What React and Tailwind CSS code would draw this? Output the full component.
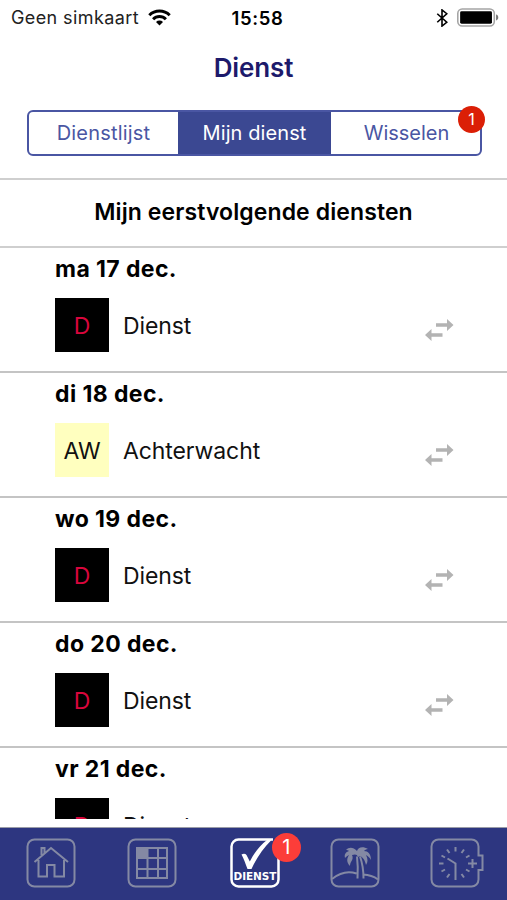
const DIENSTEN = [
  { dag: 'ma 17 dec.', code: 'D', naam: 'Dienst', kleur: 'bg-black text-[#d8063c]' },
  { dag: 'di 18 dec.', code: 'AW', naam: 'Achterwacht', kleur: 'bg-[#ffffbf] text-[#111]' },
  { dag: 'wo 19 dec.', code: 'D', naam: 'Dienst', kleur: 'bg-black text-[#d8063c]' },
  { dag: 'do 20 dec.', code: 'D', naam: 'Dienst', kleur: 'bg-black text-[#d8063c]' },
  { dag: 'vr 21 dec.', code: 'D', naam: 'Dienst', kleur: 'bg-black text-[#d8063c]' },
]

const TABS = [
  { id: 'home', icon: <HomeIcon /> },
  { id: 'rooster', icon: <RoosterIcon /> },
  { id: 'dienst', icon: <DienstIcon />, actief: true, badge: 1 },
  { id: 'vakantie', icon: <VakantieIcon /> },
  { id: 'uren', icon: <UrenIcon /> },
]

export default function App() {
  return (
    <div className="flex flex-col w-[507px] h-[900px] overflow-hidden bg-white font-['Inter',sans-serif] text-black">
      <StatusBar />
      <h1 className="h-[66px] pt-[17px] text-center text-[26px] leading-[32px] font-semibold tracking-[-0.1px] text-[#1d1a6b]">Dienst</h1>
      <Segmenten />
      <h2 className="h-[70px] shrink-0 mt-[22px] border-y-2 border-[#cfcfcf] text-center text-[23px] leading-[64px] font-semibold tracking-[0.1px]">
        Mijn eerstvolgende diensten
      </h2>
      <div className="h-[571px] shrink-0 overflow-hidden">
        {DIENSTEN.map((d) => (
          <DienstRij key={d.dag} dienst={d} />
        ))}
      </div>
      <nav className="mt-auto h-[73px] shrink-0 grid grid-cols-5 border-t border-[#9a9ca8] bg-[#2d3680]">
        {TABS.map((t) => (
          <button key={t.id} className={`relative flex justify-center pt-[10px] ${t.actief ? 'pl-[3px] text-white' : 'text-[#8489a4]'}`}>
            {t.icon}
            {t.badge && (
              <span className="absolute left-[69px] top-[5px] size-[29px] rounded-full bg-[#fc3d39] text-center text-[20px] leading-[29px] text-white">
                {t.badge}
              </span>
            )}
          </button>
        ))}
      </nav>
    </div>
  )
}

function StatusBar() {
  return (
    <div className="grid grid-cols-3 items-center h-[35px] shrink-0 pl-[11px] pr-[8px]">
      <div className="flex items-center gap-[9px]">
        <span className="whitespace-nowrap text-[18px] leading-[34px] tracking-[0.4px] text-[#222]">Geen simkaart</span>
        <svg width="23" height="17" viewBox="0 0 23 17" className="shrink-0" fill="none" stroke="currentColor" strokeWidth="3">
          <path d="M1.3 6.2a14.5 14.5 0 0 1 20.4 0M5.1 10.2a9 9 0 0 1 12.8 0" />
          <path d="M11.5 16.5 8 13a5 5 0 0 1 7 0Z" fill="currentColor" stroke="none" />
        </svg>
      </div>
      <span className="pl-[5px] text-center text-[18.5px] leading-[34px] font-semibold tracking-[0.6px]">15:58</span>
      <div className="flex items-center justify-end gap-[9px]">
        <svg width="12" height="18" viewBox="0 0 12 19" fill="none" stroke="currentColor" strokeWidth="1.7">
          <path d="M1 5l10 9-5 4V1l5 4-10 9" />
        </svg>
        <svg width="42" height="19" viewBox="0 0 43 19">
          <rect x="0.8" y="0.8" width="37.4" height="17.4" rx="4.5" fill="none" stroke="#a5a5a5" strokeWidth="1.6" />
          <rect x="3.2" y="3.2" width="32.6" height="12.6" rx="1.5" />
          <path d="M40 6.5c3 .5 3 5.500 0 6Z" fill="#777" />
        </svg>
      </div>
    </div>
  )
}

function Segmenten() {
  return (
    <div className="relative h-[55px] shrink-0 pl-[27px] pr-[25px] pt-[9px]">
      <div className="grid grid-cols-[149px_153px_1fr] h-[46px] overflow-hidden rounded-[6px] border-2 border-[#4a56a3] text-center text-[20px] leading-[43px] text-[#4a56a3]">
        <button className="tracking-[0.2px]">Dienstlijst</button>
        <button className="bg-[#3b4892] tracking-[0.1px] text-white">Mijn dienst</button>
        <button className="pl-[2px]">Wisselen</button>
      </div>
      <span className="absolute left-[458px] top-[5px] size-[27px] rounded-full bg-[#db1f06] text-center text-[16px] leading-[27px] text-white">
        1
      </span>
    </div>
  )
}

function DienstRij({ dienst: d }) {
  return (
    <div className="h-[125px] border-b-2 border-[#c4c4c4] pl-[55px] pr-[53px] pt-[6px]">
      <div className="text-[23px] leading-[30px] font-bold tracking-[0.4px]">{d.dag}</div>
      <div className="flex items-center mt-[14px]">
        <span className={`size-[54px] text-center text-[23px] leading-[56px] ${d.kleur}`}>{d.code}</span>
        <span className="ml-[14px] text-[23px] leading-[56px] -mb-[2px] tracking-[-0.1px] text-[#111]">{d.naam}</span>
        <svg width="29" height="22" viewBox="0 0 29 22" className="ml-auto mt-[9px] fill-[#b3b3b3]">
          <path d="M11 4.200h11V0l6.500 6-6.500 6V7.800H11ZM17.500 14.200h-11V10L0 16l6.500 6v-4.200h11Z" />
        </svg>
      </div>
    </div>
  )
}

function HomeIcon() {
  return (
    <svg width="50" height="50" viewBox="0 0 50 50" fill="none" stroke="currentColor" strokeWidth="2">
      <rect x="1.500" y="1.500" width="47" height="47" rx="7" />
      <path d="M8.500 24 25 10l17 14M12.500 22v16.500h8.500V27h7.500v11.500H38V22M15.500 17V10h3v5" />
    </svg>
  )
}

function RoosterIcon() {
  return (
    <svg width="50" height="50" viewBox="0 0 50 50" fill="none" stroke="currentColor" strokeWidth="2">
      <rect x="1.500" y="1.500" width="47" height="47" rx="7" />
      <path d="M10 10h30v30H10ZM20.500 10v30M31 10v30M10 20h30M10 31h30" />
      <path d="M10 10h10v10H10Z" fill="currentColor" />
    </svg>
  )
}

function DienstIcon() {
  return (
    <svg width="50" height="50" viewBox="0 0 50 50" fill="none" stroke="currentColor" strokeWidth="2.500">
      <path d="M43 1.500H8.500a7 7 0 0 0-7 7v33a7 7 0 0 0 7 7h33a7 7 0 0 0 7-7V20" />
      <path d="M11.500 16.500c2-1 4-.800 5 .500l3.300 6.500C24 15 30 7.500 37 2h4.500C33 10.500 26.500 20 21.500 31h-4C15.500 26 14 21 11.500 16.500Z" fill="currentColor" stroke="none" />
      <text x="25" y="42.200" textAnchor="middle" textLength="43" fill="currentColor" stroke="none" className="font-['DejaVu_Sans'] text-[10.500px] font-bold">
        DIENST
      </text>
    </svg>
  )
}

function VakantieIcon() {
  return (
    <svg width="50" height="50" viewBox="0 0 50 50" fill="none" stroke="currentColor" strokeWidth="2">
      <rect x="1.500" y="1.500" width="47" height="47" rx="7" />
      <path d="M2 41C10 34.500 19 33 26.500 35.500M33 36.500c6 .300 11 2 15 5M27.500 40.500c.500-8 .500-14-.500-22M33.500 40.500c0-8-1-15-3.500-22" />
      <path
        d="M28 19c-1-3-3-3-6-2 1 2 1 4-1 7-1 2-1 3-1 4-4-4-3-8-1-11-2 1-3 2-4 3-1-4 1-6 4-7-1-1-2-1-3-1 3-3 7-3 11 1 1-4 6-5 11-2-2 0-3 1-4 2 4 0 7 3 7 9-1-2-3-4-5-5 2 4 2 7 0 10-1-4-2-7-6-9Z"
        fill="currentColor"
        stroke="none"
      />
    </svg>
  )
}

function UrenIcon() {
  return (
    <svg width="54" height="50" viewBox="0 0 54 50" className="ml-[2px] overflow-visible" fill="none" stroke="currentColor" strokeWidth="2">
      <path d="M48.500 17.500V8.500a7 7 0 0 0-7-7h-33a7 7 0 0 0-7 7v33a7 7 0 0 0 7 7h33a7 7 0 0 0 7-7v-9.500h4V17.500Z" />
      <path d="M25.500 42V25.500l-8-5M38 25.500h9M42.500 21v9" />
      <path d="M25.500 9v4.500M17 11.500l2.500 3.500M11.500 17.500l3.500 2M9 25.500h4.500M11.500 33.500l3.500-2M17 39.500l2.500-3.500M34 39.500 31.500 36M39.500 33.500 36 31.500M34 11.500 31.500 15M39.500 17.500 36 19.500" />
    </svg>
  )
}
